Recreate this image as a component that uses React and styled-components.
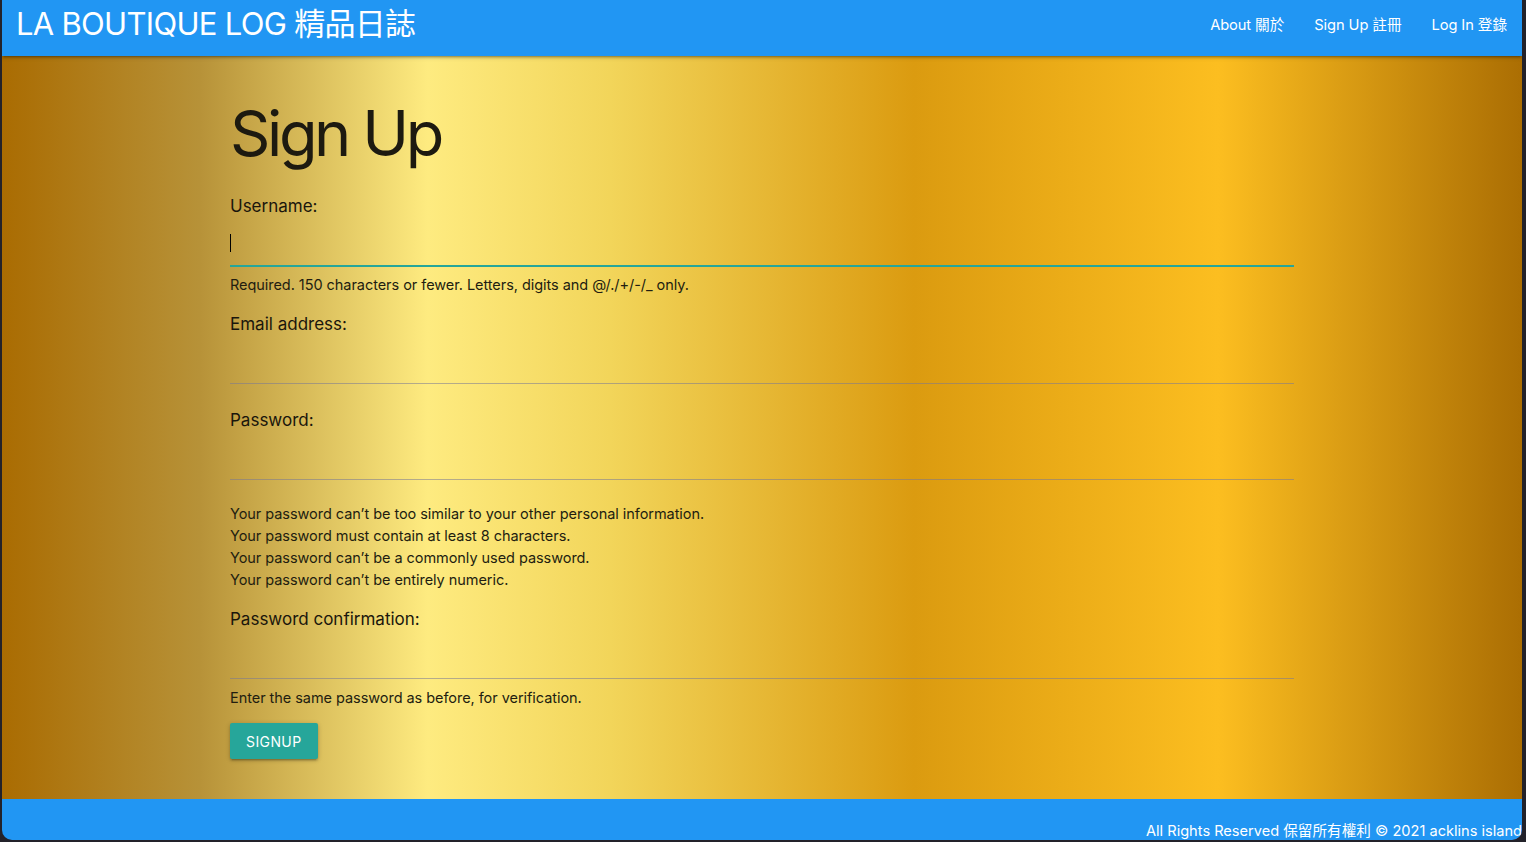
import React from "react";
import styled, { createGlobalStyle } from "styled-components";

const GlobalStyle = createGlobalStyle`
  html, body { margin: 0; padding: 0; }
  body {
    background: #23222a;
    font-family: Inter, "Noto Sans CJK TC", "Noto Sans", sans-serif;
    color: rgba(0, 0, 0, 0.87);
    -webkit-font-smoothing: antialiased;
  }
  * { box-sizing: border-box; }
`;

const Win = styled.div`
  margin-left: 2px;
  width: 1520px;
  height: 840px;
  border-radius: 0 0 10px 10px;
  overflow: hidden;
  display: flex;
  flex-direction: column;
`;

const Nav = styled.nav`
  position: relative;
  z-index: 2;
  height: 56px;
  flex: none;
  background: #2196f3;
  color: #fff;
  display: flex;
  align-items: flex-start;
  justify-content: space-between;
  box-shadow: 0 2px 2px 0 rgba(0, 0, 0, 0.14), 0 3px 1px -2px rgba(0, 0, 0, 0.12),
    0 1px 5px 0 rgba(0, 0, 0, 0.2);
`;

const Brand = styled.a`
  padding-left: 14px;
  font-size: 31px;
  line-height: 48px;
  letter-spacing: -0.7px;
  color: #fff;
  text-decoration: none;
  white-space: nowrap;
`;

const Links = styled.ul`
  list-style: none;
  margin: 0;
  padding: 0;
  display: flex;
`;

const LinkItem = styled.li`
  padding: 0 15px;
  font-size: 14.7px;
  line-height: 51px;
  letter-spacing: -0.1px;
  color: #fff;
  white-space: nowrap;
`;

const Main = styled.main`
  flex: 1;
  background: linear-gradient(
    to right,
    #aa6c02 0%,
    #b79238 13%,
    #feeb80 28%,
    #f2d55a 40%,
    #db9b10 60%,
    #fcbe20 80%,
    #ab6e03 100%
  );
`;

const Container = styled.div`
  width: 70%;
  margin: 0 auto;
`;

const Title = styled.h1`
  margin: 42px 0 0 0;
  font-size: 63px;
  line-height: 70px;
  font-weight: 400;
  letter-spacing: -3.4px;
  color: #1d1a10;
`;

const Form = styled.form`
  display: flex;
  flex-direction: column;
  margin-top: 28px;
`;

const Field = styled.div`
  display: flex;
  flex-direction: column;
  margin-bottom: 18px;
`;

const Label = styled.label`
  font-size: 17px;
  line-height: 20px;
  margin-bottom: 4px;
  color: #1a160c;
`;

const Input = styled.input`
  height: 46px;
  margin: 0 0 8px 0;
  padding: 0;
  border: none;
  border-bottom: 1px solid ${(p) => (p.$focused ? "#26a69a" : "rgba(120,120,150,0.55)")};
  box-shadow: ${(p) => (p.$focused ? "0 1px 0 0 #26a69a" : "none")};
  background: transparent;
  outline: none;
  font-family: inherit;
  font-size: 16px;
  caret-color: #000;
`;

const Caret = styled.span`
  position: absolute;
  left: 0;
  top: 14px;
  width: 1px;
  height: 18px;
  background: #000;
`;

const InputWrap = styled.div`
  position: relative;
  display: flex;
  flex-direction: column;
`;

const Help = styled.span`
  font-size: 14.5px;
  line-height: 22px;
  letter-spacing: -0.05px;
  color: #221d10;
`;

const HintList = styled.div`
  display: flex;
  flex-direction: column;
  margin-top: 15px;
`;

const Button = styled.button`
  align-self: flex-start;
  margin-top: -4px;
  height: 36px;
  padding: 0 16px;
  border: none;
  border-radius: 2px;
  background: #26a69a;
  color: #fff;
  font-family: inherit;
  font-size: 14px;
  letter-spacing: 0.4px;
  text-transform: uppercase;
  box-shadow: 0 2px 2px 0 rgba(0, 0, 0, 0.14), 0 3px 1px -2px rgba(0, 0, 0, 0.12),
    0 1px 5px 0 rgba(0, 0, 0, 0.2);
`;

const Footer = styled.footer`
  flex: none;
  height: 41px;
  background: #2196f3;
  color: #fff;
  display: flex;
  justify-content: flex-end;
  align-items: flex-end;
`;

const FootText = styled.span`
  font-size: 14.6px;
  line-height: 20px;
  margin-bottom: -1px;
  white-space: nowrap;
`;

export default function App() {
  return (
    <>
      <GlobalStyle />
      <Win>
        <Nav>
          <Brand>LA BOUTIQUE LOG 精品日誌</Brand>
          <Links>
            <LinkItem>About 關於</LinkItem>
            <LinkItem>Sign Up 註冊</LinkItem>
            <LinkItem>Log In 登錄</LinkItem>
          </Links>
        </Nav>
        <Main>
          <Container>
            <Title>Sign Up</Title>
            <Form onSubmit={(e) => e.preventDefault()}>
              <Field>
                <Label>Username:</Label>
                <InputWrap>
                  <Input $focused type="text" />
                  <Caret />
                </InputWrap>
                <Help>Required. 150 characters or fewer. Letters, digits and @/./+/-/_ only.</Help>
              </Field>
              <Field>
                <Label>Email address:</Label>
                <Input type="email" />
              </Field>
              <Field>
                <Label>Password:</Label>
                <Input type="password" />
                <HintList>
                  <Help>Your password can’t be too similar to your other personal information.</Help>
                  <Help>Your password must contain at least 8 characters.</Help>
                  <Help>Your password can’t be a commonly used password.</Help>
                  <Help>Your password can’t be entirely numeric.</Help>
                </HintList>
              </Field>
              <Field>
                <Label>Password confirmation:</Label>
                <Input type="password" />
                <Help>Enter the same password as before, for verification.</Help>
              </Field>
              <Button type="submit">Signup</Button>
            </Form>
          </Container>
        </Main>
        <Footer>
          <FootText>All Rights Reserved 保留所有權利 © 2021 acklins island</FootText>
        </Footer>
      </Win>
    </>
  );
}
